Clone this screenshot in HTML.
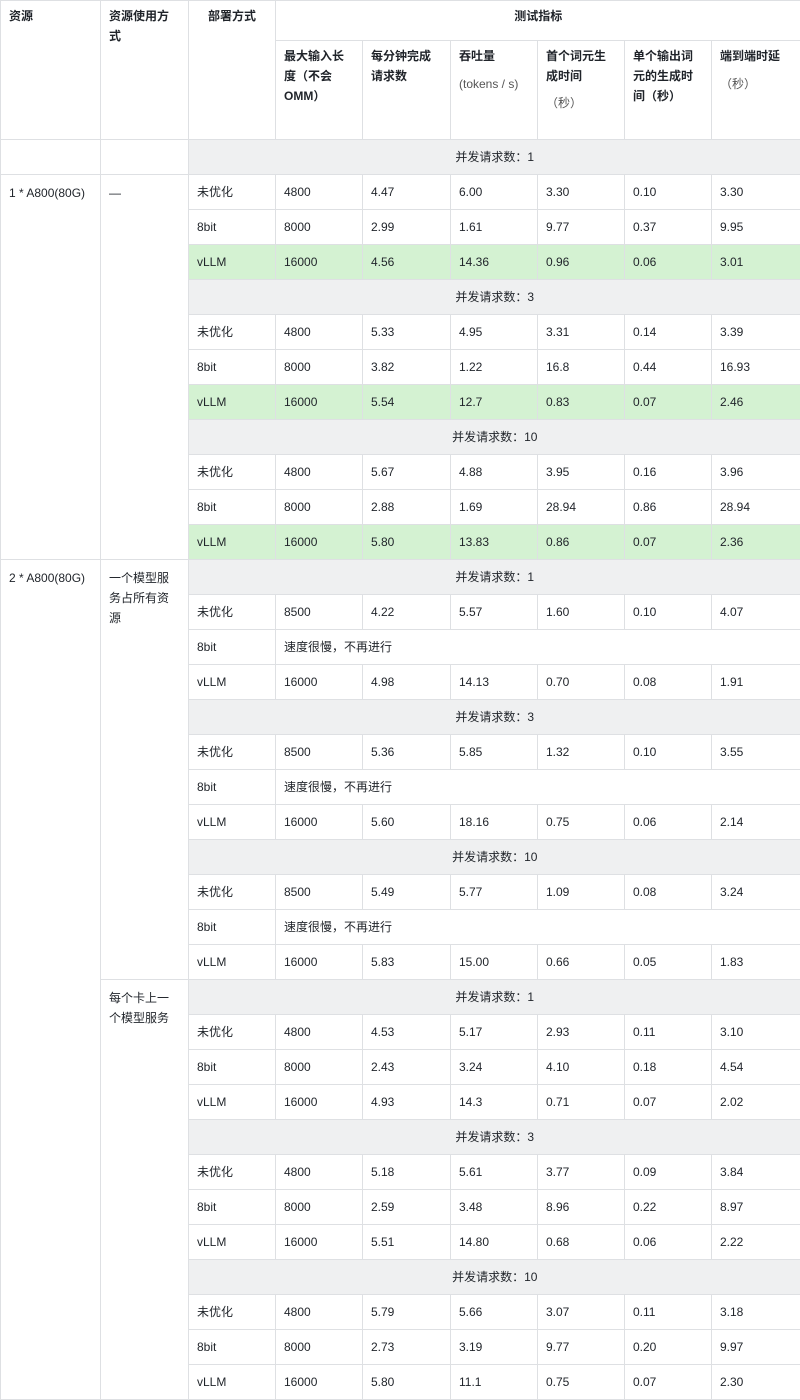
<!DOCTYPE html>
<html><head><meta charset="utf-8"><style>
html,body{margin:0;padding:0;background:#fff;}
body{width:800px;height:1393px;overflow:hidden;}
table{border-collapse:collapse;table-layout:fixed;width:800px;font-family:"Liberation Sans","Noto Sans CJK SC",sans-serif;font-size:12px;color:#1f2329;}
td,th{border:1px solid #dee0e3;padding:0 8px;height:34px;vertical-align:middle;white-space:nowrap;overflow:hidden;line-height:20px;font-weight:normal;text-align:left;}
tr>*:last-child{border-right:none;}
th{font-weight:bold;vertical-align:top;padding-top:5px;white-space:normal;}
.top{vertical-align:top;padding-top:8px;white-space:normal;}
tr.g td{background:#eff0f1;text-align:center;}
tr.v td{background:#d4f2d2;}
td.s{border-right:none;}
.sub{font-weight:normal;color:#555;}
</style></head><body>
<table>
<colgroup><col style="width:100px"><col style="width:88px"><col style="width:87px"><col style="width:87px"><col style="width:88px"><col style="width:87px"><col style="width:87px"><col style="width:87px"><col style="width:89px"></colgroup>
<tr style="height:35px"><th rowspan="2">资源</th><th rowspan="2">资源使用方式</th><th rowspan="2" style="text-align:center">部署方式</th><th colspan="6" style="text-align:center">测试指标</th></tr>
<tr style="height:99px"><th>最大输入长度（不会OMM）</th><th>每分钟完成请求数</th><th>吞吐量<div class="sub" style="margin-top:8px">(tokens / s)</div></th><th>首个词元生成时间<div class="sub" style="margin-top:7px">（秒）</div></th><th>单个输出词元的生成时间（秒）</th><th>端到端时延<div class="sub" style="margin-top:8px">（秒）</div></th></tr>
<tr class="g" style="height:35px"><td style="background:#fff"></td><td style="background:#fff"></td><td colspan="7">并发请求数：1</td></tr>
<tr><td rowspan="11" class="top">1 * A800(80G)</td><td rowspan="11" class="top">—</td><td>未优化</td><td>4800</td><td>4.47</td><td>6.00</td><td>3.30</td><td>0.10</td><td>3.30</td></tr>
<tr><td>8bit</td><td>8000</td><td>2.99</td><td>1.61</td><td>9.77</td><td>0.37</td><td>9.95</td></tr>
<tr class="v"><td>vLLM</td><td>16000</td><td>4.56</td><td>14.36</td><td>0.96</td><td>0.06</td><td>3.01</td></tr>
<tr class="g"><td colspan="7">并发请求数：3</td></tr>
<tr><td>未优化</td><td>4800</td><td>5.33</td><td>4.95</td><td>3.31</td><td>0.14</td><td>3.39</td></tr>
<tr><td>8bit</td><td>8000</td><td>3.82</td><td>1.22</td><td>16.8</td><td>0.44</td><td>16.93</td></tr>
<tr class="v"><td>vLLM</td><td>16000</td><td>5.54</td><td>12.7</td><td>0.83</td><td>0.07</td><td>2.46</td></tr>
<tr class="g"><td colspan="7">并发请求数：10</td></tr>
<tr><td>未优化</td><td>4800</td><td>5.67</td><td>4.88</td><td>3.95</td><td>0.16</td><td>3.96</td></tr>
<tr><td>8bit</td><td>8000</td><td>2.88</td><td>1.69</td><td>28.94</td><td>0.86</td><td>28.94</td></tr>
<tr class="v"><td>vLLM</td><td>16000</td><td>5.80</td><td>13.83</td><td>0.86</td><td>0.07</td><td>2.36</td></tr>
<tr class="g"><td rowspan="24" class="top" style="background:#fff;text-align:left">2 * A800(80G)</td><td rowspan="12" class="top" style="background:#fff;text-align:left">一个模型服务占所有资源</td><td colspan="7">并发请求数：1</td></tr>
<tr><td>未优化</td><td>8500</td><td>4.22</td><td>5.57</td><td>1.60</td><td>0.10</td><td>4.07</td></tr>
<tr><td>8bit</td><td colspan="6">速度很慢，不再进行</td></tr>
<tr><td>vLLM</td><td>16000</td><td>4.98</td><td>14.13</td><td>0.70</td><td>0.08</td><td>1.91</td></tr>
<tr class="g"><td colspan="7">并发请求数：3</td></tr>
<tr><td>未优化</td><td>8500</td><td>5.36</td><td>5.85</td><td>1.32</td><td>0.10</td><td>3.55</td></tr>
<tr><td>8bit</td><td colspan="6">速度很慢，不再进行</td></tr>
<tr><td>vLLM</td><td>16000</td><td>5.60</td><td>18.16</td><td>0.75</td><td>0.06</td><td>2.14</td></tr>
<tr class="g"><td colspan="7">并发请求数：10</td></tr>
<tr><td>未优化</td><td>8500</td><td>5.49</td><td>5.77</td><td>1.09</td><td>0.08</td><td>3.24</td></tr>
<tr><td>8bit</td><td colspan="6">速度很慢，不再进行</td></tr>
<tr><td>vLLM</td><td>16000</td><td>5.83</td><td>15.00</td><td>0.66</td><td>0.05</td><td>1.83</td></tr>
<tr class="g"><td rowspan="12" class="top" style="background:#fff;text-align:left">每个卡上一个模型服务</td><td colspan="7">并发请求数：1</td></tr>
<tr><td>未优化</td><td>4800</td><td>4.53</td><td>5.17</td><td>2.93</td><td>0.11</td><td>3.10</td></tr>
<tr><td>8bit</td><td>8000</td><td>2.43</td><td>3.24</td><td>4.10</td><td>0.18</td><td>4.54</td></tr>
<tr><td>vLLM</td><td>16000</td><td>4.93</td><td>14.3</td><td>0.71</td><td>0.07</td><td>2.02</td></tr>
<tr class="g"><td colspan="7">并发请求数：3</td></tr>
<tr><td>未优化</td><td>4800</td><td>5.18</td><td>5.61</td><td>3.77</td><td>0.09</td><td>3.84</td></tr>
<tr><td>8bit</td><td>8000</td><td>2.59</td><td>3.48</td><td>8.96</td><td>0.22</td><td>8.97</td></tr>
<tr><td>vLLM</td><td>16000</td><td>5.51</td><td>14.80</td><td>0.68</td><td>0.06</td><td>2.22</td></tr>
<tr class="g"><td colspan="7">并发请求数：10</td></tr>
<tr><td>未优化</td><td>4800</td><td>5.79</td><td>5.66</td><td>3.07</td><td>0.11</td><td>3.18</td></tr>
<tr><td>8bit</td><td>8000</td><td>2.73</td><td>3.19</td><td>9.77</td><td>0.20</td><td>9.97</td></tr>
<tr><td>vLLM</td><td>16000</td><td>5.80</td><td>11.1</td><td>0.75</td><td>0.07</td><td>2.30</td></tr>
</table>
</body></html>
